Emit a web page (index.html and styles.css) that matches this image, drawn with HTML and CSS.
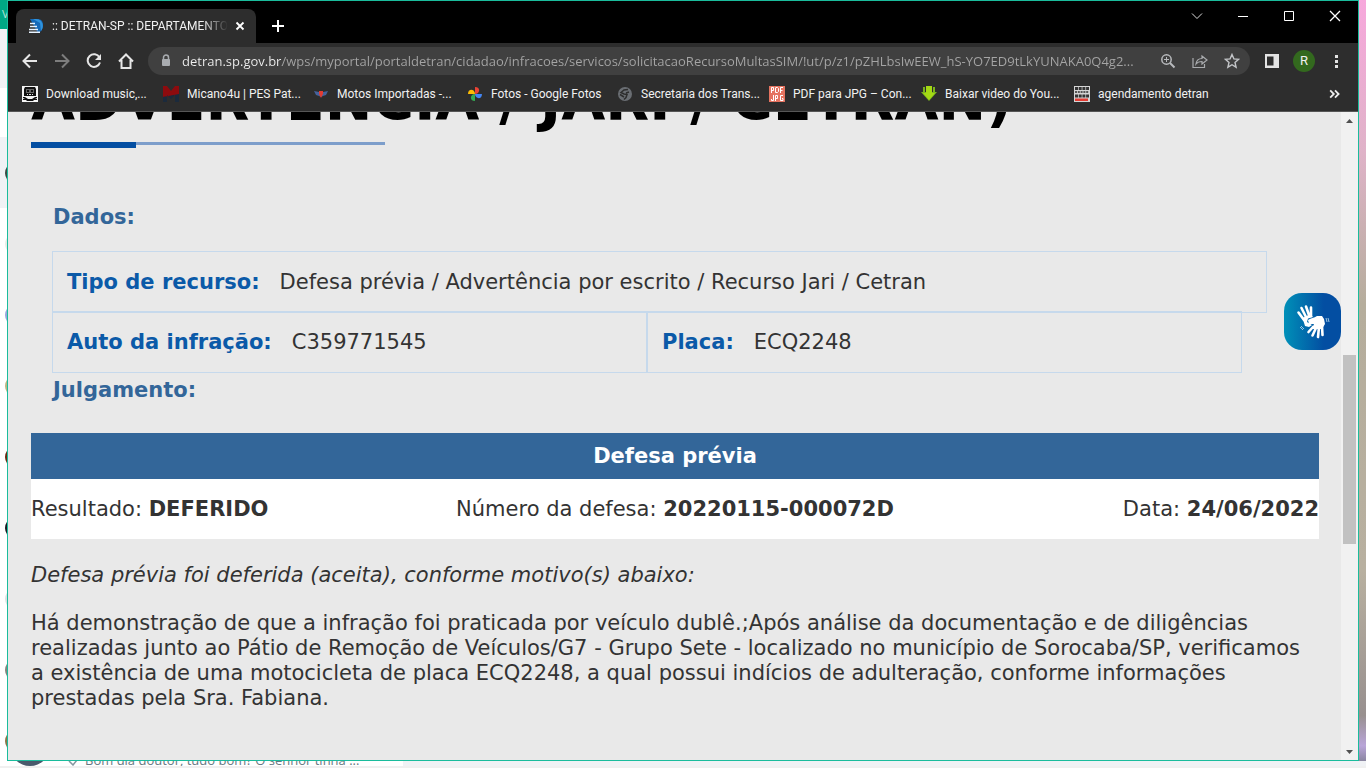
FILE: index.html
```html
<!DOCTYPE html>
<html lang="pt-BR">
<head>
<meta charset="utf-8">
<title>DETRAN-SP</title>
<link rel="stylesheet" href="styles.css">
</head>
<body>
<div class="desktop">
  <aside class="chat-edge">
    <div class="chat-head">V</div>
    <div class="chat-search"></div>
    <ul class="chat-list">
      <li class="chat-row active"><span class="face f1"></span></li>
      <li class="chat-row"><span class="face f2"></span></li>
      <li class="chat-row"><span class="face f3"></span></li>
      <li class="chat-row"><span class="face f4"></span></li>
      <li class="chat-row"><span class="face f5"></span></li>
      <li class="chat-row"><span class="face f6"></span></li>
      <li class="chat-row"><span class="face f7"></span></li>
      <li class="chat-row"><span class="face f8"></span></li>
      <li class="chat-row"><span class="face f9"></span></li>
    </ul>
  </aside>

  <section class="window">
    <header class="tabstrip">
      <div class="tab">
        <svg class="favicon" viewBox="0 0 16 16"><path d="M2 1h7c4 0 6 2 6 6s-2 7-5 8z" fill="#1669b8"/><path d="M5 1l7 4 1 8c4-5 1-12-5-12z" fill="#2f93dd"/><path d="M2 5.500h5M2 8.500h7M1 11.500h9M1 14.200h11" stroke="#e8f3ff" stroke-width="1.500"/></svg>
        <span class="tab-title">:: DETRAN-SP :: DEPARTAMENTO ESTADUAL</span>
        <button class="tab-close" aria-label="Fechar guia"><svg viewBox="0 0 10 10"><path d="M1.500 1.500l7 7M8.500 1.500l-7 7" stroke="#fff" stroke-width="1.800"/></svg></button>
      </div>
      <button class="new-tab" aria-label="Nova guia"><svg viewBox="0 0 12 12"><path d="M6 0v12M0 6h12" stroke="#fff" stroke-width="2"/></svg></button>
      <div class="controls">
        <button class="control" aria-label="Pesquisar guias"><svg viewBox="0 0 12 12"><path d="M1 3.500l5 5 5-5" stroke="#ddd" fill="none"/></svg></button>
        <button class="control" aria-label="Minimizar"><svg viewBox="0 0 12 12"><path d="M1 6.500h10" stroke="#fff"/></svg></button>
        <button class="control" aria-label="Maximizar"><svg viewBox="0 0 12 12"><path d="M1.500 1.500h9v9h-9z" stroke="#fff" fill="none"/></svg></button>
        <button class="control" aria-label="Fechar"><svg viewBox="0 0 12 12"><path d="M1 1l10 10M11 1L1 11" stroke="#fff" stroke-width="1.300"/></svg></button>
      </div>
    </header>

    <nav class="toolbar">
      <button class="tool" aria-label="Voltar"><svg viewBox="0 0 16 16"><path d="M15 8H2M8 1.500L1.500 8 8 14.500" stroke="#e6e6e6" stroke-width="2" fill="none"/></svg></button>
      <button class="tool" aria-label="Avançar"><svg viewBox="0 0 16 16"><path d="M1 8h13M8 1.500L14.500 8 8 14.500" stroke="#7d7d7d" stroke-width="2" fill="none"/></svg></button>
      <button class="tool" aria-label="Recarregar"><svg viewBox="0 0 16 16"><path d="M13.500 4.500A6.300 6.300 0 1 0 14 9.500" stroke="#e6e6e6" stroke-width="2" fill="none"/><path d="M15 1v6H9z" fill="#e6e6e6"/></svg></button>
      <button class="tool" aria-label="Página inicial"><svg viewBox="0 0 16 16"><path d="M1 8.500L8 1.500l7 7M3.500 7v8h9V7" stroke="#e6e6e6" stroke-width="2" fill="none"/></svg></button>
      <form class="omnibox">
        <svg class="lock" viewBox="0 0 10 14"><path d="M2.500 6V3.500a2.500 2.500 0 0 1 5 0V6" stroke="#a9acb0" stroke-width="1.500" fill="none"/><rect x="1" y="5" width="8" height="7" rx="1" fill="#a9acb0"/></svg>
        <input class="address" type="text" aria-label="Endereço" value="detran.sp.gov.br/wps/myportal/portaldetran/cidadao/infracoes/servicos/solicitacaoRecursoMultasSIM/!ut/p/z1/pZHLbsIwEEW_hS-YO7ED9tLkYUNAKA0Q4g2...">
        <button type="button" class="tool" aria-label="Zoom"><svg viewBox="0 0 16 16"><circle cx="6.500" cy="6.500" r="4.700" stroke="#b8babd" stroke-width="1.500" fill="none"/><path d="M10 10l4.500 4.500" stroke="#b8babd" stroke-width="2"/><path d="M6.500 4v5M4 6.500h5" stroke="#b8babd"/></svg></button>
        <button type="button" class="tool" aria-label="Compartilhar"><svg viewBox="0 0 16 16"><path d="M1 5v9.500h11.500V11" stroke="#a9abae" stroke-width="1.200" fill="none"/><path d="M4 11c.5-4 2.500-5.500 6-5.500V3l5 4-5 4V8.500c-3 0-4.500.5-6 2.500z" stroke="#a9abae" stroke-width="1.200" fill="none"/></svg></button>
        <button type="button" class="tool" aria-label="Favoritar"><svg viewBox="0 0 16 16"><path d="M8 1.500l1.900 4.400 4.700.4-3.600 3.200 1.100 4.700L8 11.700l-4.100 2.500L5 9.500 1.400 6.300l4.700-.4z" stroke="#c3c5c8" stroke-width="1.400" fill="none"/></svg></button>
      </form>
      <button class="tool" aria-label="Painel lateral"><svg viewBox="0 0 16 16"><path d="M1 1h14v14H1z" fill="#e3e3e3"/><path d="M3 3.500h6.500v9H3z" fill="#2d2d2d"/></svg></button>
      <button class="tool" aria-label="Perfil"><span class="profile">R</span></button>
      <button class="tool" aria-label="Menu"><svg viewBox="0 0 16 16"><path d="M7 2h3v3H7zM7 7h3v3H7zM7 12h3v3H7z" fill="#e3e3e3"/></svg></button>
    </nav>

    <nav class="bookmarks">
      <a class="bookmark" href="#"><svg viewBox="0 0 16 16"><path d="M0 0h16v16H0z" fill="#f4f4f4"/><path d="M3 1h10l1 2v7H2V3z" fill="#111"/><path d="M4 3h8v4H4z" fill="#666"/><path d="M5 4h2v2H5zM9 4h2v2H9zM5 8h6v1H5z" fill="#111"/><path d="M5 8h1v1H5zM7 8h2v1H7zM10 8h1v1h-1z" fill="#ddd"/><path d="M1 11h2l3 2h4l3-2h2v1l-2 1h2v1h-3l-1 1H5l-1-1H1v-1h2l-2-1z" fill="#111"/></svg><span>Download music,...</span></a>
      <a class="bookmark" href="#"><svg viewBox="0 0 16 16"><path d="M0 0h4l4 5 4-5h4v9L0 11z" fill="#8d0b0e"/><path d="M0 11l16-3v8h-4V9l-4 4-4-4v7H0z" fill="#1b2a3c"/></svg><span>Micano4u | PES Pat...</span></a>
      <a class="bookmark" href="#"><svg viewBox="0 0 16 16"><path d="M1 5l5 1 2-1 2 1 5-1-2 4-3 1-2 1-2-1-3-1z" fill="#45629c"/><path d="M6 5h4v3l-2 4-2-4z" fill="#e13b32"/></svg><span>Motos Importadas -...</span></a>
      <a class="bookmark" href="#"><svg viewBox="0 0 16 16"><path d="M8 8V1c6 0 5 7 0 7z" fill="#ea4335"/><path d="M8 8h7c0 6-7 5-7 0z" fill="#4285f4"/><path d="M8 8v7c-6 0-5-7 0-7z" fill="#34a853"/><path d="M8 8H1c0-6 7-5 7 0z" fill="#fbbc04"/></svg><span>Fotos - Google Fotos</span></a>
      <a class="bookmark" href="#"><svg viewBox="0 0 16 16"><circle cx="8" cy="8" r="7" fill="#6a6e73"/><path d="M11 3.500L7 4 4 6.500l3 1.500 3 .5-1 3-2 2M12 6l-3 1M3 8.500l4 2.500" stroke="#2d2d2d" stroke-width="1.500" fill="none"/></svg><span>Secretaria dos Trans...</span></a>
      <a class="bookmark" href="#"><svg viewBox="0 0 16 16"><path d="M0 0h16v16H0z" fill="#e57360"/><path d="M2.500 7V1.500h2v3h-2M6.500 2v4.500h2l1-1v-3l-1-1h-2M11.500 7V1.500H14M11.500 4.500h2M4.500 9v5.500h-2V13M6.500 15V9.500h2v3h-2M14 9.500h-2.500v5H14v-2h-1" stroke="#fff" fill="none"/></svg><span>PDF para JPG – Con...</span></a>
      <a class="bookmark" href="#"><svg viewBox="0 0 16 16"><path d="M2 1v5H0l8 9 8-9h-2V1h-2v5h-1V1H5v5H4V1z" fill="#7bb51c"/><path d="M5 0h6v7h3l-6 7-6-7h3z" fill="#a4d914"/></svg><span>Baixar video do You...</span></a>
      <a class="bookmark" href="#"><svg viewBox="0 0 16 16"><path d="M0 0h16v16H0z" fill="#d5d5d5"/><path d="M1 2.500h14M1 10h14" stroke="#333" stroke-width="3" stroke-dasharray="3 .7"/><path d="M1 6h14" stroke="#555" stroke-width="2" stroke-dasharray="2 .8"/><path d="M1 12.500h13V15H1z" fill="#e33b32"/></svg><span>agendamento detran</span></a>
      <button class="more" aria-label="Mais favoritos"><svg viewBox="0 0 10 10"><path d="M1 2l3 3-3 3M5 2l3 3-3 3" stroke="#eee" stroke-width="1.500" fill="none"/></svg></button>
    </nav>

    <div class="viewport">
      <main class="page">
        <div class="title-clip"><h1 class="title">ADVERTÊNCIA / JARI / CETRAN)</h1></div>
        <div class="rule"><span class="rule-strong"></span><span class="rule-light"></span></div>
        <h2 class="subtitle">Dados:</h2>
        <dl class="data">
          <div class="cell"><dt>Tipo de recurso:</dt><dd>Defesa prévia / Advertência por escrito / Recurso Jari / Cetran</dd></div>
          <div class="pair">
            <div class="cell"><dt>Auto da infração:</dt><dd>C359771545</dd></div>
            <div class="cell"><dt>Placa:</dt><dd>ECQ2248</dd></div>
          </div>
        </dl>
        <h2 class="subtitle judgement">Julgamento:</h2>
        <h3 class="band">Defesa prévia</h3>
        <div class="result">
          <span>Resultado: <b>DEFERIDO</b></span>
          <span>Número da defesa: <b>20220115-000072D</b></span>
          <span>Data: <b>24/06/2022</b></span>
        </div>
        <p class="text"><em>Defesa prévia foi deferida (aceita), conforme motivo(s) abaixo:</em></p>
        <p class="text">Há demonstração de que a infração foi praticada por veículo dublê.;Após análise da documentação e de diligências realizadas junto ao Pátio de Remoção de Veículos/G7 - Grupo Sete - localizado no município de Sorocaba/SP, verificamos a existência de uma motocicleta de placa ECQ2248, a qual possui indícios de adulteração, conforme informações prestadas pela Sra. Fabiana.</p>
        <button class="libras" aria-label="Acessível em Libras"><svg viewBox="0 0 57 57"><g fill="none" stroke="#fff" stroke-linecap="round"><path d="M20 27L14.500 19.500M22 24L17.500 15M25 22L22 13.500M27 23L27 14.500" stroke-width="2.600"/><path d="M29 34l-4.500 5M32 35l-3.500 7.500M35 34l-1 10M38 33l.5 9" stroke-width="2.600"/></g><path d="M18.500 25l8-4 2.500 3-5 1.500-1 3.500 5 3-3 2-4-1z" fill="#fff"/><path d="M24 27c3-2 6-2 9-4l5 0 2 3 1 5-3 5-10 0 2-5-5 0z" fill="#fff"/><path d="M16 34l3 3M17 33l3 3M42 25l1 4M44 25l1 4" stroke="#9bc3e0"/></svg></button>
      </main>
      <div class="scrollbar">
        <svg viewBox="0 0 17 17"><path d="M5 11h7L8.500 7z" fill="#505050"/></svg>
        <div class="track"><div class="thumb"></div></div>
        <svg viewBox="0 0 17 17"><path d="M5 7h7l-3.500 4z" fill="#505050"/></svg>
      </div>
    </div>
  </section>

  <div class="wall"></div>

  <footer class="chat-bottom">
    <div class="chat-peek">
      <span class="peek-face"></span>
      <svg class="tick" viewBox="0 0 10 10"><path d="M1 5l4 4 4-5" stroke="#8696a0" stroke-width="1.500" fill="none"/></svg>
      <span class="peek-text">Bom dia doutor, tudo bom? O senhor tinha ...</span>
    </div>
  </footer>
</div>
</body>
</html>
```

FILE: styles.css
```css
* { box-sizing: border-box; }

body {
  margin: 0;
  font-family: "DejaVu Sans", Verdana, sans-serif;
  color: #333;
}

button {
  display: flex;
  align-items: center;
  justify-content: center;
  padding: 0;
  border: 0;
  background: none;
  color: inherit;
  font: inherit;
}

h1, h2, h3, p, dl, dd, ul { margin: 0; padding: 0; }

.desktop {
  display: grid;
  grid-template-columns: 7px 1fr 7px;
  grid-template-rows: 1fr 7px;
  height: 100vh;
  overflow: hidden;
}

/* Chat application behind the browser */
.chat-edge { overflow: hidden; background: #fff; }
.chat-head {
  height: 29px;
  padding: 6px 0 0 2px;
  background: #00a884;
  color: #b5e5da;
  font: 11px "Open Sans", sans-serif;
}
.chat-search { height: 108px; background: linear-gradient(#f0f2f5 59px, #fff 59px); }
.chat-list { list-style: none; }
.chat-row { display: flex; align-items: center; height: 71px; padding-left: 5px; }
.chat-row.active { background: #f0f2f5; }
.face { flex: none; width: 22px; height: 22px; border-radius: 50%; }
.f1 { background: #3c4a44; }
.f2 { background: #e8ebe6; }
.f3 { background: #9aa6dc; }
.f4 { background: #bdb582; }
.f5 { background: #6b2a12; }
.f6 { background: #1a1a22; }
.f7 { background: #dfe1e3; }
.f8 { background: #85847e; }
.f9 { background: #8c7448; }

.chat-bottom {
  grid-column: 1 / -1;
  overflow: hidden;
  border-bottom: 2px solid #f0f0f0;
  background: #f0f2f5;
}
.chat-peek {
  display: flex;
  align-items: flex-end;
  width: 403px;
  height: 5px;
  padding-left: 10px;
  background: #fff;
}
.peek-face { width: 40px; height: 40px; margin-right: 18px; border-radius: 50%; background: #4a5a6c; }
.tick { width: 10px; height: 10px; margin-right: 7px; }
.peek-text { color: #667781; font: 13px/12px "Open Sans", sans-serif; white-space: nowrap; }

.wall { background: linear-gradient(#f7a8dc, #dfb3c8 20%, #b5ad9c 40%, #b8b0a0 75%, #98908f 94%, #b9a5d8 98%, #8a86a0); }

/* Browser window */
.window {
  display: flex;
  flex-direction: column;
  min-width: 0;
  min-height: 0;
  border: 1px solid #1abc9c;
  background: #2d2d2d;
  color: #f1f1f1;
  font: 12px/16px Roboto, "Segoe UI", sans-serif;
}

.tabstrip { display: flex; flex: none; height: 42px; padding-left: 8px; background: #000; }
.tab {
  display: flex;
  align-items: center;
  width: 240px;
  margin-top: 8px;
  padding: 0 10px 0 12px;
  border-radius: 8px 8px 0 0;
  background: #2d2d2d;
}
.favicon { flex: none; width: 16px; height: 16px; margin-right: 8px; }
.tab-title {
  flex: 1;
  overflow: hidden;
  white-space: nowrap;
  mask-image: linear-gradient(90deg, #000 85%, transparent);
}
.tab-close { width: 12px; height: 16px; margin-left: 6px; }
.tab-close svg { width: 10px; height: 10px; }
.new-tab { width: 28px; height: 28px; margin: 11px 0 0 8px; }
.new-tab svg { width: 12px; height: 12px; }
.controls { display: flex; margin-left: auto; }
.control { width: 46px; height: 29px; }
.control svg { width: 12px; height: 12px; }

.toolbar { display: flex; flex: none; align-items: center; height: 36px; padding: 0 6px; }
.tool { flex: none; width: 32px; height: 28px; }
.tool svg { width: 16px; height: 16px; }
.omnibox {
  display: flex;
  flex: 1;
  align-items: center;
  height: 28px;
  min-width: 0;
  margin: 0 6px;
  padding: 0 2px 0 13px;
  border-radius: 14px;
  background: #404040;
}
.lock { flex: none; width: 10px; height: 14px; margin-right: 11px; }
.address {
  flex: 1;
  min-width: 0;
  padding: 0;
  border: 0;
  outline: 0;
  background: linear-gradient(90deg, #f1f1f1 100px, #a5a5a5 100px);
  background-clip: text;
  color: transparent;
  font: 13px/20px "Open Sans", "Segoe UI", sans-serif;
}
.profile {
  width: 22px;
  height: 22px;
  border-radius: 50%;
  background: #33691e;
  font: 13px/22px Roboto, sans-serif;
}

.bookmarks {
  display: grid;
  flex: none;
  grid-template-columns: 125px 134px 138px 134px 136px 136px 137px 1fr 16px;
  column-gap: 16px;
  align-items: center;
  height: 33px;
  padding: 0 15px 3px 14px;
  border-bottom: 1px solid #565656;
}
.bookmark { display: flex; align-items: center; gap: 8px; color: inherit; text-decoration: none; white-space: nowrap; }
.bookmark svg { flex: none; width: 16px; height: 16px; }
.more svg { width: 12px; height: 12px; }

/* Page */
.viewport { display: flex; flex: 1; min-height: 0; background: #e9e9e9; }
.page {
  position: relative;
  flex: 1;
  min-width: 0;
  overflow: hidden;
  padding: 0 22px 0 23px;
  color: #333;
  font: 21px/25px "DejaVu Sans", Verdana, sans-serif;
}
.title-clip { display: flex; align-items: flex-end; height: 24px; overflow: hidden; }
.title { color: #000; font-size: 57px; line-height: 72px; white-space: nowrap; }
.rule { display: flex; width: 354px; height: 6px; margin: 6px 0 57px; }
.rule-strong { width: 105px; background: #034ea2; }
.rule-light { flex: 1; height: 3px; background: #7d9ecb; }
.subtitle { padding-left: 22px; color: #336699; font-size: 21px; line-height: 25px; }
.data { margin: 21px 52px 5px 21px; }
.cell {
  display: flex;
  flex: 1;
  align-items: center;
  gap: 20px;
  height: 62px;
  padding: 1px 14px 0;
  border: 1px solid #c6d9ec;
}
.pair { display: flex; margin: -2px 25px 0 0; }
.cell dt { color: #0b5aa8; font-weight: bold; }
.judgement { margin-bottom: 30px; }
.band {
  background: #336699;
  color: #fff;
  font-size: 21px;
  line-height: 46px;
  text-align: center;
}
.result {
  display: grid;
  grid-template-columns: 1fr auto 1fr;
  margin-bottom: 24px;
  background: #fff;
  line-height: 60px;
}
.result span:last-child { text-align: right; }
.text { margin-bottom: 23px; }

.libras {
  position: absolute;
  top: 181px;
  right: 0;
  width: 57px;
  height: 57px;
  border-radius: 18px;
  background: linear-gradient(90deg, #0090b8, #034ea2 70%);
}
.libras svg { width: 57px; height: 57px; }

.scrollbar { display: flex; flex: none; flex-direction: column; width: 17px; background: #f1f1f1; }
.scrollbar svg { flex: none; width: 17px; height: 17px; }
.track { flex: 1; padding: 226px 2px 0; }
.thumb { height: 189px; background: #c1c1c1; }
```
